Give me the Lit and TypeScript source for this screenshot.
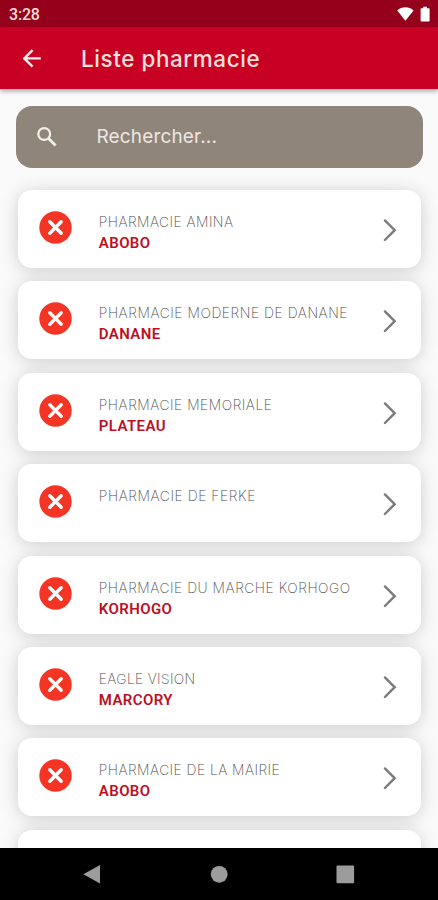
import { LitElement, html, css } from "lit";
import { customElement, property } from "lit/decorators.js";

interface Pharmacy {
  name: string;
  city: string;
  tracking: number;
}

const PHARMACIES: Pharmacy[] = [
  { name: "PHARMACIE AMINA", city: "ABOBO", tracking: 0.47 },
  { name: "PHARMACIE MODERNE DE DANANE", city: "DANANE", tracking: 0.57 },
  { name: "PHARMACIE MEMORIALE", city: "PLATEAU", tracking: 0.54 },
  { name: "PHARMACIE DE FERKE", city: "", tracking: 0.59 },
  { name: "PHARMACIE DU MARCHE KORHOGO", city: "KORHOGO", tracking: 0.54 },
  { name: "EAGLE VISION", city: "MARCORY", tracking: 0.34 },
  { name: "PHARMACIE DE LA MAIRIE", city: "ABOBO", tracking: 0.48 },
  { name: "", city: "", tracking: 0 },
];

@customElement("pharmacy-card")
export class PharmacyCard extends LitElement {
  @property({ attribute: false }) item!: Pharmacy;

  static styles = css`
    :host {
      display: block;
      flex: none;
      height: 78px;
      border-radius: 14px;
      background: #fff;
      box-shadow: 0 2px 18px rgba(0, 0, 0, 0.18);
    }
    .row {
      display: flex;
      height: 100%;
      box-sizing: border-box;
      padding: 0 23px 0 21px;
    }
    .badge {
      width: 33px;
      height: 33px;
      margin-top: 21px;
      flex: none;
    }
    .labels {
      flex: 1;
      margin: 22px 0 0 26.5px;
      white-space: nowrap;
    }
    .name {
      display: block;
      font: 250 13.8px/20px Inter, sans-serif;
      color: #4c4c4c;
    }
    .city {
      font: 600 15px/22px Roboto, sans-serif;
      letter-spacing: 0.4px;
      color: #bd0f1f;
    }
    .chevron {
      width: 16px;
      height: 24px;
      margin-top: 28px;
      flex: none;
    }
  `;

  render() {
    const { name, city, tracking } = this.item;
    return html`<div class="row">
      <svg class="badge" viewBox="0 0 33 33">
        <circle cx="16.5" cy="16.5" r="16.2" fill="#f43525" />
        <path d="M10.8 10.8 22.2 22.2M22.2 10.8 10.8 22.2" stroke="#fff" stroke-width="3.4" stroke-linecap="round" />
      </svg>
      <div class="labels">
        <span class="name" style="letter-spacing:${tracking}px">${name}</span>
        <div class="city">${city}</div>
      </div>
      <svg class="chevron" viewBox="0 0 16 24" fill="none">
        <path d="M2.9 2.4 12.7 12.2 2.9 22" stroke="#7b7b7b" stroke-width="2.4" stroke-linecap="round" />
      </svg>
    </div>`;
  }
}

@customElement("app-root")
export class AppRoot extends LitElement {
  static styles = css`
    :host {
      display: flex;
      flex-direction: column;
      height: 900px;
      overflow: hidden;
      background: #fafafa;
    }
    .status {
      flex: none;
      height: 27px;
      box-sizing: border-box;
      padding: 0 8px 0 9px;
      display: flex;
      align-items: center;
      background: #95001b;
      color: #f9dcd8;
      font: 500 16px/28px Roboto, sans-serif;
      z-index: 2;
    }
    .time {
      flex: 1;
      padding-top: 2px;
      letter-spacing: -0.2px;
    }
    .bar {
      flex: none;
      height: 62px;
      display: flex;
      align-items: center;
      background: #c80024;
      box-shadow: 0 2px 5px rgba(0, 0, 0, 0.35);
      z-index: 1;
    }
    .back {
      width: 20px;
      height: 20px;
      margin-left: 22px;
    }
    .title {
      margin-left: 39px;
      padding-top: 1px;
      font: 450 22.4px/30px Inter, sans-serif;
      letter-spacing: 0.6px;
      color: #fbe0d8;
      white-space: nowrap;
    }
    .main {
      flex: 1;
      min-height: 0;
      overflow: hidden;
    }
    .search {
      height: 62px;
      margin: 16.5px 15.5px 0 16px;
      border-radius: 16px;
      background: #90857b;
      display: flex;
      align-items: center;
    }
    .lens {
      width: 22px;
      height: 22px;
      margin-left: 20px;
    }
    .hint {
      margin-left: 38.5px;
      font: 400 19px/26px Inter, sans-serif;
      letter-spacing: 0.15px;
      color: #ece7e3;
    }
    .list {
      display: flex;
      flex-direction: column;
      gap: 13.4px;
      margin: 22.5px 17.5px 0 18.3px;
    }
    .nav {
      flex: none;
      height: 52.5px;
      background: #000;
      z-index: 1;
    }
    .nav svg {
      display: block;
    }
  `;

  render() {
    return html`
      <div class="status">
        <span class="time">3:28</span>
        <svg width="34" height="18" viewBox="0 0 34 18" fill="#fff">
          <path d="M1.2 5.4C5.6 1.1 13.2 1.1 17.6 5.4L9.4 15.8Z" />
          <path d="M25.4 3.2h1.8V1.8h3.8v1.4h1.8q.8 0 .8.8v11.8q0 .8-.8.8h-7.4q-.8 0-.8-.8V4q0-.8.8-.8z" />
        </svg>
      </div>
      <div class="bar">
        <svg class="back" viewBox="0 0 20 20" fill="none" stroke="#fff0ec" stroke-width="2.4">
          <path d="M18.8 10.4H2.5M10.6 2.1 2.3 10.4l8.3 8.3" />
        </svg>
        <span class="title">Liste pharmacie</span>
      </div>
      <div class="main">
        <div class="search">
          <svg class="lens" viewBox="0 0 22 22" fill="none" stroke="#f5f0ec">
            <circle cx="8.2" cy="8" r="5.9" stroke-width="2.2" />
            <path d="m12.3 12.2 7.3 7.3" stroke-width="2.8" />
          </svg>
          <span class="hint">Rechercher...</span>
        </div>
        <div class="list">
          ${PHARMACIES.map((p) => html`<pharmacy-card .item=${p}></pharmacy-card>`)}
        </div>
      </div>
      <div class="nav">
        <svg width="438" height="52" viewBox="0 0 438 52" fill="#9c9c9c">
          <path d="M83.3 26.3 100 17v18.6z" />
          <circle cx="219.2" cy="26.3" r="8.4" />
          <rect x="336.5" y="17.6" width="17.6" height="17.6" rx="1" />
        </svg>
      </div>
    `;
  }
}
